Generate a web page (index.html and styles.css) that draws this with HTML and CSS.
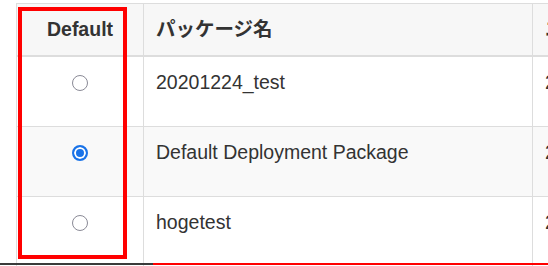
FILE: index.html
```html
<!DOCTYPE html>
<html lang="ja">
<head>
    <meta charset="UTF-8">
    <meta name="viewport" content="width=device-width, initial-scale=1.0">
    <title>パッケージ一覧</title>
    <link rel="stylesheet" href="styles.css">
</head>
<body>
    <div class="page">
        <table class="pkg-table">
            <colgroup>
                <col class="col-default">
                <col class="col-name">
                <col class="col-date">
            </colgroup>
            <thead>
                <tr>
                    <th class="cell-default">Default</th>
                    <th>パッケージ名</th>
                    <th>エクスポート日時</th>
                </tr>
            </thead>
            <tbody>
                <tr>
                    <td class="cell-default"><input type="radio" name="default-pkg" class="radio"></td>
                    <td>20201224_test</td>
                    <td>2020/12/24 10:15</td>
                </tr>
                <tr class="striped">
                    <td class="cell-default"><input type="radio" name="default-pkg" class="radio" checked></td>
                    <td>Default Deployment Package</td>
                    <td>2020/12/01 09:00</td>
                </tr>
                <tr>
                    <td class="cell-default"><input type="radio" name="default-pkg" class="radio"></td>
                    <td>hogetest</td>
                    <td>2020/12/20 18:42</td>
                </tr>
            </tbody>
        </table>

        <!-- annotation marks drawn over the screenshot -->
        <div class="mark-box"></div>
        <div class="mark-line mark-dark"></div>
        <div class="mark-line mark-red"></div>
    </div>
</body>
</html>
```

FILE: styles.css
```css
:root {
    --text-color: #333;
    --border-color: #ddd;
    --head-bg: #f7f7f7;
    --stripe-bg: #f9f9f9;
    --accent: #1a73e8;
    --mark-red: #ff0000;
}

* {
    margin: 0;
    padding: 0;
    box-sizing: border-box;
}

body {
    background-color: white;
    color: var(--text-color);
    font-family: "Liberation Sans", Arial, "Noto Sans CJK JP", sans-serif;
    font-size: 19.5px;
    line-height: 28px;
}

.page {
    position: relative;
    width: 548px;
    height: 266px;
    overflow: hidden;
    padding: 3px 0 0 16px;
}

.pkg-table {
    border-collapse: collapse;
    table-layout: fixed;
    width: 720px;
}

.col-default {
    width: 127px;
}

.col-name {
    width: 389px;
}

.col-date {
    width: 204px;
}

.pkg-table th,
.pkg-table td {
    border: 1px solid var(--border-color);
    padding: 11px 12px 10px;
    text-align: left;
    white-space: nowrap;
    overflow: hidden;
}

.pkg-table th {
    background-color: var(--head-bg);
    font-weight: bold;
    height: 52px;
    padding-top: 10px;
    vertical-align: middle;
    border-bottom: 2px solid var(--border-color);
}

.pkg-table td {
    height: 70.5px;
    vertical-align: top;
}

.pkg-table .cell-default {
    text-align: center;
    padding-left: 0;
    padding-right: 0;
}

.striped td {
    background-color: var(--stripe-bg);
}

.radio {
    appearance: none;
    -webkit-appearance: none;
    display: inline-block;
    width: 16px;
    height: 16px;
    margin-top: 7px;
    vertical-align: top;
    border: 1.5px solid #8a8a96;
    border-radius: 50%;
    background-color: white;
}

.radio:checked {
    border: 2px solid var(--accent);
    background-color: var(--accent);
    box-shadow: inset 0 0 0 2px white;
}

.mark-box {
    position: absolute;
    left: 18px;
    top: 7px;
    width: 109px;
    height: 252px;
    border: 4px solid var(--mark-red);
}

.mark-line {
    position: absolute;
    top: 263px;
    height: 2px;
}

.mark-dark {
    left: 0;
    width: 153px;
    background-color: #3a3a3a;
}

.mark-red {
    left: 153px;
    right: 0;
    background-color: var(--mark-red);
}
```
